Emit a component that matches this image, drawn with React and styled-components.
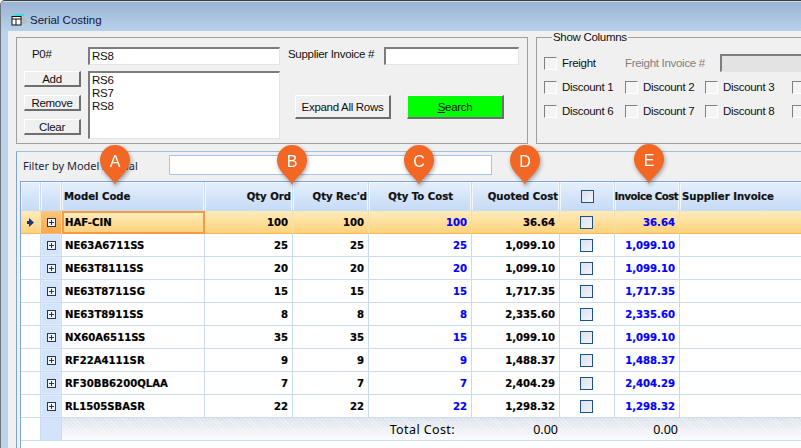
import React from "react"
import styled, { createGlobalStyle } from "styled-components"

const GlobalStyle = createGlobalStyle`
  html, body {
    margin: 0;
    padding: 0;
    background: #fff;
    overflow: hidden;
  }
  * {
    box-sizing: border-box;
  }
`

const rows = [
  { code: "HAF-CIN", ord: "100", rec: "100", cost: "100", quoted: "36.64", invoice: "36.64", selected: true },
  { code: "NE63A6711SS", ord: "25", rec: "25", cost: "25", quoted: "1,099.10", invoice: "1,099.10" },
  { code: "NE63T8111SS", ord: "20", rec: "20", cost: "20", quoted: "1,099.10", invoice: "1,099.10" },
  { code: "NE63T8711SG", ord: "15", rec: "15", cost: "15", quoted: "1,717.35", invoice: "1,717.35" },
  { code: "NE63T8911SS", ord: "8", rec: "8", cost: "8", quoted: "2,335.60", invoice: "2,335.60" },
  { code: "NX60A6511SS", ord: "35", rec: "35", cost: "15", quoted: "1,099.10", invoice: "1,099.10" },
  { code: "RF22A4111SR", ord: "9", rec: "9", cost: "9", quoted: "1,488.37", invoice: "1,488.37" },
  { code: "RF30BB6200QLAA", ord: "7", rec: "7", cost: "7", quoted: "2,404.29", invoice: "2,404.29" },
  { code: "RL1505SBASR", ord: "22", rec: "22", cost: "22", quoted: "1,298.32", invoice: "1,298.32" },
]

const pins = [
  { letter: "A", x: 100, y: 145 },
  { letter: "B", x: 277, y: 145 },
  { letter: "C", x: 404, y: 145 },
  { letter: "D", x: 510, y: 145 },
  { letter: "E", x: 634, y: 144 },
]

const Window = styled.div`
  position: relative;
  width: 801px;
  height: 448px;
  overflow: hidden;
  display: flex;
  flex-direction: column;
  background: #b9d3ed;
  border-top: 1px solid #3c3c3c;
  border-left: 1px solid #6d7480;
  border-top-left-radius: 5px;
  font-family: "Liberation Sans", Arial, sans-serif;
  font-size: 11.5px;
  letter-spacing: -0.3px;
  color: #111;
`

const TitleBar = styled.div`
  flex: none;
  height: 30px;
  display: flex;
  align-items: center;
  gap: 3px;
  padding: 6px 0 0 10px;
  letter-spacing: 0;
  background: linear-gradient(#9ab4d2, #b8d1eb);
  border-top: 1px solid #cfdcea;
  color: #16163a;
`

const Content = styled.div`
  flex: 1;
  min-height: 0;
  margin-left: 7px;
  display: flex;
  flex-direction: column;
  background: #f0f0f0;
  padding: 6px 0 0 8px;
`

const TopRow = styled.div`
  flex: none;
  width: 900px;
  display: flex;
  gap: 8px;
`

const SearchGroup = styled.div`
  flex: none;
  width: 512px;
  height: 107px;
  border: 1px solid #a0a0a0;
  padding: 9px 0 0 7px;
  display: grid;
  grid-template-columns: 57px 192px 232px;
  grid-template-rows: 18px 68px;
  column-gap: 7px;
  row-gap: 6px;
`

const PoLabel = styled.span`
  padding: 0 0 0 8px;
  line-height: 14px;
`

const Sunken = styled.div`
  border-style: solid;
  border-width: 2px 1px 1px 2px;
  border-color: #7d7d7d #e4e4e4 #e4e4e4 #7d7d7d;
  background: ${(p) => (p.$disabled ? "#e3e3e3" : "#fff")};
  padding: 0 1px 0 2px;
  line-height: 15px;
`

const SupplierRow = styled.div`
  display: flex;
  align-items: flex-start;
  gap: 9px;
  padding-left: 1px;
`

const SupplierLabel = styled.span`
  flex: none;
  width: 87px;
  white-space: nowrap;
  line-height: 14px;
`

const SupplierInput = styled(Sunken)`
  width: 136px;
  height: 18px;
`

const ButtonColumn = styled.div`
  display: flex;
  flex-direction: column;
  gap: 8px;
`

const Button = styled.button`
  width: ${(p) => p.$width || 57}px;
  height: ${(p) => p.$height || 16}px;
  padding: 0;
  font: inherit;
  letter-spacing: inherit;
  color: #111;
  background: ${(p) => p.$bg || "#f0f0f0"};
  border-style: solid;
  border-width: 1px 2px 2px 1px;
  border-color: #fff #6e6e6e #6e6e6e #fff;
`

const ListBox = styled(Sunken)`
  padding: 1px 2px;
  line-height: 13px;
`

const ActionRow = styled.div`
  display: flex;
  align-items: flex-start;
  gap: 16px;
  padding: 24px 0 0 8px;
`

const Columns = styled.fieldset`
  flex: none;
  width: 340px;
  height: 113px;
  margin: -6px 0 0;
  padding: 8px 0 0 7px;
  border: 1px solid #a0a0a0;
`

const ColumnsTitle = styled.legend`
  margin-left: 8px;
  padding: 0 1px;
  line-height: 12px;
`

const CheckRow = styled.div`
  display: flex;
  align-items: center;
  height: 24px;
`

const CheckField = styled.label`
  flex: none;
  display: flex;
  align-items: center;
  gap: 5px;
  width: ${(p) => p.$width}px;
`

const CheckBox = styled.span`
  flex: none;
  width: 13px;
  height: 13px;
  background: #f4f4f4;
  border-style: solid;
  border-width: 1px;
  border-color: #808080 #fff #fff #808080;
`

const DisabledLabel = styled.span`
  width: 95px;
  color: #808080;
`

const FreightInput = styled(Sunken)`
  width: 120px;
  height: 18px;
`

const GridPanel = styled.div`
  flex: 1;
  min-height: 0;
  width: 900px;
  margin-top: 7px;
  border-top: 1px solid #a7bfdc;
  border-left: 1px solid #7ea5d5;
  padding: 3px 0 0 3px;
  display: flex;
  flex-direction: column;
`

const FilterRow = styled.div`
  flex: none;
  display: flex;
  align-items: center;
  height: 20px;
  padding-left: 3px;
  margin-bottom: 6px;
`

const FilterLabel = styled.span`
  width: 146px;
  font-family: "Noto Sans", sans-serif;
  font-size: 11px;
  letter-spacing: 0;
  color: #1e1e3c;
`

const FilterInput = styled.div`
  width: 323px;
  height: 20px;
  background: #fff;
  border: 1px solid #a9c5ea;
`

const GridArea = styled.div`
  flex: 1;
  background: #fff;
  border-top: 1px solid #7ea5d5;
  border-left: 1px solid #7ea5d5;
  display: grid;
  grid-template-columns: 20px 21px 143px 88px 76px 103px 88px 55px 65px 1fr;
  grid-auto-rows: min-content;
  font-family: "DejaVu Sans", sans-serif;
  font-size: 10.1px;
  font-weight: 700;
  letter-spacing: 0;
  -webkit-text-stroke: 0.2px currentColor;
`

const HeaderCell = styled.div`
  height: 29px;
  display: flex;
  align-items: center;
  justify-content: ${(p) => (p.$align === "center" ? "center" : p.$align === "right" ? "flex-end" : "flex-start")};
  padding: 0 ${(p) => p.$pad ?? 1}px 0 2px;
  letter-spacing: ${(p) => p.$tight || 0}px;
  white-space: nowrap;
  background: linear-gradient(#e5effc, #c6dbf6);
  border-right: 1px solid #c9dcf3;
  border-bottom: 1px solid #c9dcf3;
  box-shadow: inset 1px 1px 0 #f4f8fe, inset -1px 0 0 #f4f8fe;
`

const Cell = styled.div`
  height: 23px;
  display: flex;
  align-items: center;
  justify-content: ${(p) => (p.$align === "center" ? "center" : p.$align === "left" ? "flex-start" : "flex-end")};
  padding: 0 4px 0 3px;
  white-space: nowrap;
  color: ${(p) => (p.$blue ? "#0000ff" : "#000")};
  background: ${(p) => (p.$selected ? "linear-gradient(#ffecbb, #fdd27c)" : "#fff")};
  border-right: 1px solid ${(p) => (p.$selected ? "#f6dfa9" : "#c9dcf3")};
  border-bottom: 1px solid ${(p) => (p.$selected ? "#f9b65a" : "#c9dcf3")};
`

const ExpandCell = styled(Cell)`
  padding: 0;
  justify-content: center;
  background: ${(p) => (p.$selected ? "linear-gradient(#fcc579, #faa94e)" : "#d3e4fa")};
  box-shadow: ${(p) => (p.$selected ? "none" : "inset 0 0 0 1px #dfebfb")};
`

const ActiveCell = styled(Cell)`
  border: 2px solid #f59a45;
  padding: 0 4px 0 1px;
`

const FooterBlank = styled.div`
  height: 23px;
  background: ${(p) => (p.$tint ? "#d3e4fa" : "#fff")};
  border-right: 1px solid #c9dcf3;
  border-bottom: 1px solid #c9dcf3;
`

const Footer = styled.div`
  grid-column: 3 / -1;
  height: 23px;
  display: grid;
  grid-template-columns: 143px 88px 76px 103px 88px 55px 65px 1fr;
  align-items: center;
  font-family: "Noto Sans", sans-serif;
  font-size: 12.5px;
  font-weight: 400;
  -webkit-text-stroke: 0;
  color: #000;
  border-bottom: 1px solid #c9dcf3;
  background:
    repeating-linear-gradient(45deg, rgba(255, 255, 255, 0.35) 0 1px, transparent 1px 3px),
    linear-gradient(#dde2eb, #fbfcfe);
`

const FooterValue = styled.span`
  grid-column: ${(p) => p.$column};
  justify-self: end;
  padding-right: ${(p) => p.$pad || 2}px;
  letter-spacing: ${(p) => p.$spacing || 0}px;
  white-space: nowrap;
`

const GridCheck = styled.span`
  width: 13px;
  height: 13px;
  border: 1px solid #1d5287;
  background: linear-gradient(135deg, #dde1ed, #f2f4f9);
`

const Pin = styled.div`
  position: absolute;
  left: ${(p) => p.$x - 1}px;
  top: ${(p) => p.$y - 1}px;
  width: 30px;
  height: 40px;
  filter: drop-shadow(1px 2px 2px rgba(0, 0, 0, 0.35));
`

const PinLetter = styled.span`
  position: absolute;
  left: 0;
  right: 0;
  top: 8px;
  text-align: center;
  font-size: 16px;
  letter-spacing: 0;
  line-height: 18px;
  color: #fff;
`

const Underline = styled.span`
  text-decoration: underline;
`

const TitleIcon = () => (
  <svg width="16" height="12" viewBox="0 0 16 12">
    <rect x="3" y="0" width="10" height="2" fill="#35e0e0" />
    <rect x="9" y="3" width="6" height="7" fill="#b8bcc4" />
    <rect x="1" y="2.5" width="9" height="8.5" fill="#fff" stroke="#111" />
    <path d="M1 5h9M5 5v6" stroke="#111" fill="none" />
  </svg>
)

const RowArrow = () => (
  <svg width="7" height="9" viewBox="0 0 7 9">
    <path d="M2 0l5 4.5L2 9V6H0V3h2z" fill="#17387a" />
  </svg>
)

const ExpandIcon = () => (
  <svg width="9" height="9" viewBox="0 0 9 9">
    <rect x=".5" y=".5" width="8" height="8" fill="#eef2f9" stroke="#28364e" />
    <path d="M2 4.5h5M4.5 2v5" stroke="#28364e" fill="none" />
  </svg>
)

const PinShape = () => (
  <svg width="30" height="40" viewBox="0 0 30 40">
    <path d="M15 40C13 33 0 27 0 15a15 15 0 0 1 30 0C30 27 17 33 15 40z" fill="#f26724" />
  </svg>
)

const App = () => {
  return (
    <Window>
      <GlobalStyle />
      <TitleBar>
        <TitleIcon />
        <span>Serial Costing</span>
      </TitleBar>

      <Content>
        <TopRow>
          <SearchGroup>
            <PoLabel>P0#</PoLabel>
            <Sunken>RS8</Sunken>
            <SupplierRow>
              <SupplierLabel>Supplier Invoice #</SupplierLabel>
              <SupplierInput />
            </SupplierRow>
            <ButtonColumn>
              <Button>Add</Button>
              <Button>Remove</Button>
              <Button>Clear</Button>
            </ButtonColumn>
            <ListBox>
              RS6
              <br />
              RS7
              <br />
              RS8
            </ListBox>
            <ActionRow>
              <Button $width={96} $height={24}>
                Expand All Rows
              </Button>
              <Button $width={97} $height={24} $bg="#00ff00">
                <Underline>S</Underline>earch
              </Button>
            </ActionRow>
          </SearchGroup>

          <Columns>
            <ColumnsTitle>Show Columns</ColumnsTitle>
            <CheckRow>
              <CheckField $width={81}>
                <CheckBox />
                Freight
              </CheckField>
              <DisabledLabel>Freight Invoice #</DisabledLabel>
              <FreightInput $disabled />
            </CheckRow>
            <CheckRow>
              <CheckField $width={81}><CheckBox />Discount 1</CheckField>
              <CheckField $width={80}><CheckBox />Discount 2</CheckField>
              <CheckField $width={87}><CheckBox />Discount 3</CheckField>
              <CheckBox />
            </CheckRow>
            <CheckRow>
              <CheckField $width={81}><CheckBox />Discount 6</CheckField>
              <CheckField $width={80}><CheckBox />Discount 7</CheckField>
              <CheckField $width={87}><CheckBox />Discount 8</CheckField>
              <CheckBox />
            </CheckRow>
          </Columns>
        </TopRow>

        <GridPanel>
          <FilterRow>
            <FilterLabel>Filter by Model / Serial</FilterLabel>
            <FilterInput />
          </FilterRow>
          <GridArea>
            <HeaderCell />
            <HeaderCell />
            <HeaderCell>Model Code</HeaderCell>
            <HeaderCell $align="right">Qty Ord</HeaderCell>
            <HeaderCell $align="right">Qty Rec'd</HeaderCell>
            <HeaderCell $align="right" $pad={18}>Qty To Cost</HeaderCell>
            <HeaderCell $align="right">Quoted Cost</HeaderCell>
            <HeaderCell $align="center">
              <GridCheck />
            </HeaderCell>
            <HeaderCell $align="right" $tight={-0.5}>Invoice Cost</HeaderCell>
            <HeaderCell>Supplier Invoice</HeaderCell>

            {rows.map((row) => (
              <React.Fragment key={row.code}>
                <Cell $selected={row.selected} $align="center">
                  {row.selected && <RowArrow />}
                </Cell>
                <ExpandCell $selected={row.selected}>
                  <ExpandIcon />
                </ExpandCell>
                {row.selected ? (
                  <ActiveCell $selected $align="left">{row.code}</ActiveCell>
                ) : (
                  <Cell $align="left">{row.code}</Cell>
                )}
                <Cell $selected={row.selected}>{row.ord}</Cell>
                <Cell $selected={row.selected}>{row.rec}</Cell>
                <Cell $selected={row.selected} $blue>{row.cost}</Cell>
                <Cell $selected={row.selected}>{row.quoted}</Cell>
                <Cell $selected={row.selected} $align="center">
                  <GridCheck />
                </Cell>
                <Cell $selected={row.selected} $blue>{row.invoice}</Cell>
                <Cell $selected={row.selected} />
              </React.Fragment>
            ))}

            <FooterBlank />
            <FooterBlank $tint />
            <Footer>
              <FooterValue $column="4 / 5" $pad={17} $spacing={0.4}>Total Cost:</FooterValue>
              <FooterValue $column="5 / 6">0.00</FooterValue>
              <FooterValue $column="7 / 8">0.00</FooterValue>
            </Footer>
          </GridArea>
        </GridPanel>
      </Content>

      {pins.map((pin) => (
        <Pin key={pin.letter} $x={pin.x} $y={pin.y}>
          <PinShape />
          <PinLetter>{pin.letter}</PinLetter>
        </Pin>
      ))}
    </Window>
  )
}

export default App
